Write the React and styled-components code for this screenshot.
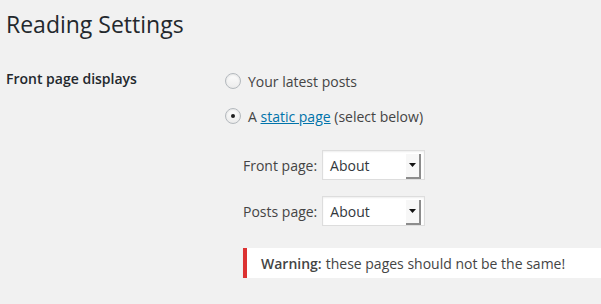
import styled, { createGlobalStyle } from "styled-components";

const GlobalStyle = createGlobalStyle`
  html, body {
    margin: 0;
    padding: 0;
    background: #f1f1f1;
  }
  body {
    font-family: "Open Sans", "Liberation Sans", sans-serif;
    color: #23282d;
    overflow: hidden;
  }
`;

export default function App() {
  return (
    <Wrap>
      <GlobalStyle />
      <Title>Reading Settings</Title>
      <FormRow>
        <RowLabel>Front page displays</RowLabel>
        <Options>
          <RadioLine>
            <Radio />
            <span>Your latest posts</span>
          </RadioLine>
          <RadioLine>
            <Radio checked />
            <span>
              A <Link href="#">static page</Link> (select below)
            </span>
          </RadioLine>
          <SubOptions>
            <SelectLine>
              <span>Front page:</span>
              <SelectBox>
                <span>About</span>
                <ArrowButton>
                  <svg width="7" height="5" viewBox="0 0 7 5">
                    <path d="M0 0h7L3.5 4z" fill="#111" />
                  </svg>
                </ArrowButton>
              </SelectBox>
            </SelectLine>
            <SelectLine>
              <span>Posts page:</span>
              <SelectBox>
                <span>About</span>
                <ArrowButton>
                  <svg width="7" height="5" viewBox="0 0 7 5">
                    <path d="M0 0h7L3.5 4z" fill="#111" />
                  </svg>
                </ArrowButton>
              </SelectBox>
            </SelectLine>
            <Notice>
              <strong>Warning:</strong> these pages should not be the same!
            </Notice>
          </SubOptions>
        </Options>
      </FormRow>
    </Wrap>
  );
}

const Wrap = styled.div`
  padding: 9px 0 0 6px;
`;

const Title = styled.h1`
  margin: 0;
  font-size: 23px;
  line-height: 30px;
  font-weight: 400;
  color: #23282d;
`;

const FormRow = styled.div`
  display: grid;
  grid-template-columns: 219px 1fr;
  margin-top: 30px;
`;

const RowLabel = styled.div`
  font-size: 14px;
  line-height: 20px;
  font-weight: 600;
  color: #23282d;
`;

const Options = styled.div`
  display: flex;
  flex-direction: column;
  margin-top: 4px;
`;

const RadioLine = styled.label`
  display: flex;
  align-items: center;
  gap: 7px;
  height: 16px;
  margin-bottom: 19px;
  font-size: 14px;
  color: #444;
`;

const Radio = styled.span`
  width: 14px;
  height: 14px;
  flex: none;
  border-radius: 50%;
  border: 1px solid #b4b9be;
  background: linear-gradient(#fdfdfd, #ececec);
  box-shadow: inset 0 1px 2px rgba(0, 0, 0, 0.1);
  display: flex;
  align-items: center;
  justify-content: center;

  &::after {
    content: "";
    display: ${(p) => (p.checked ? "block" : "none")};
    width: 4px;
    height: 4px;
    border-radius: 50%;
    background: #1e1e1e;
  }
`;

const Link = styled.a`
  color: #0073aa;
  text-decoration: underline;
`;

const SubOptions = styled.div`
  display: flex;
  flex-direction: column;
  padding-left: 18px;
  margin-top: 7px;
`;

const SelectLine = styled.div`
  display: flex;
  align-items: center;
  gap: 5px;
  height: 30px;
  margin-bottom: 16px;
  font-size: 14px;
  color: #444;
`;

const SelectBox = styled.div`
  box-sizing: border-box;
  width: 103px;
  height: 30px;
  display: flex;
  align-items: center;
  justify-content: space-between;
  padding: 0 3px 0 7px;
  background: #fff;
  border: 1px solid #ddd;
  box-shadow: inset 0 1px 2px rgba(0, 0, 0, 0.07);
  font-size: 14px;
  color: #32373c;
`;

const ArrowButton = styled.span`
  box-sizing: border-box;
  width: 15px;
  height: 25px;
  margin-top: 2px;
  display: flex;
  align-items: center;
  justify-content: center;
  padding-top: 1px;
  background: #f7f7f7;
  border-right: 2px solid #8c8c8c;
  border-bottom: 2px solid #8c8c8c;
`;

const Notice = styled.div`
  box-sizing: border-box;
  height: 30px;
  margin-top: 6px;
  display: flex;
  align-items: center;
  padding: 0 0 0 14px;
  background: #fff;
  border-left: 4px solid #dc3232;
  box-shadow: 0 1px 1px rgba(0, 0, 0, 0.08);
  font-size: 14px;
  color: #444;
  white-space: nowrap;

  strong {
    font-weight: 600;
    margin-right: 4px;
  }
`;
